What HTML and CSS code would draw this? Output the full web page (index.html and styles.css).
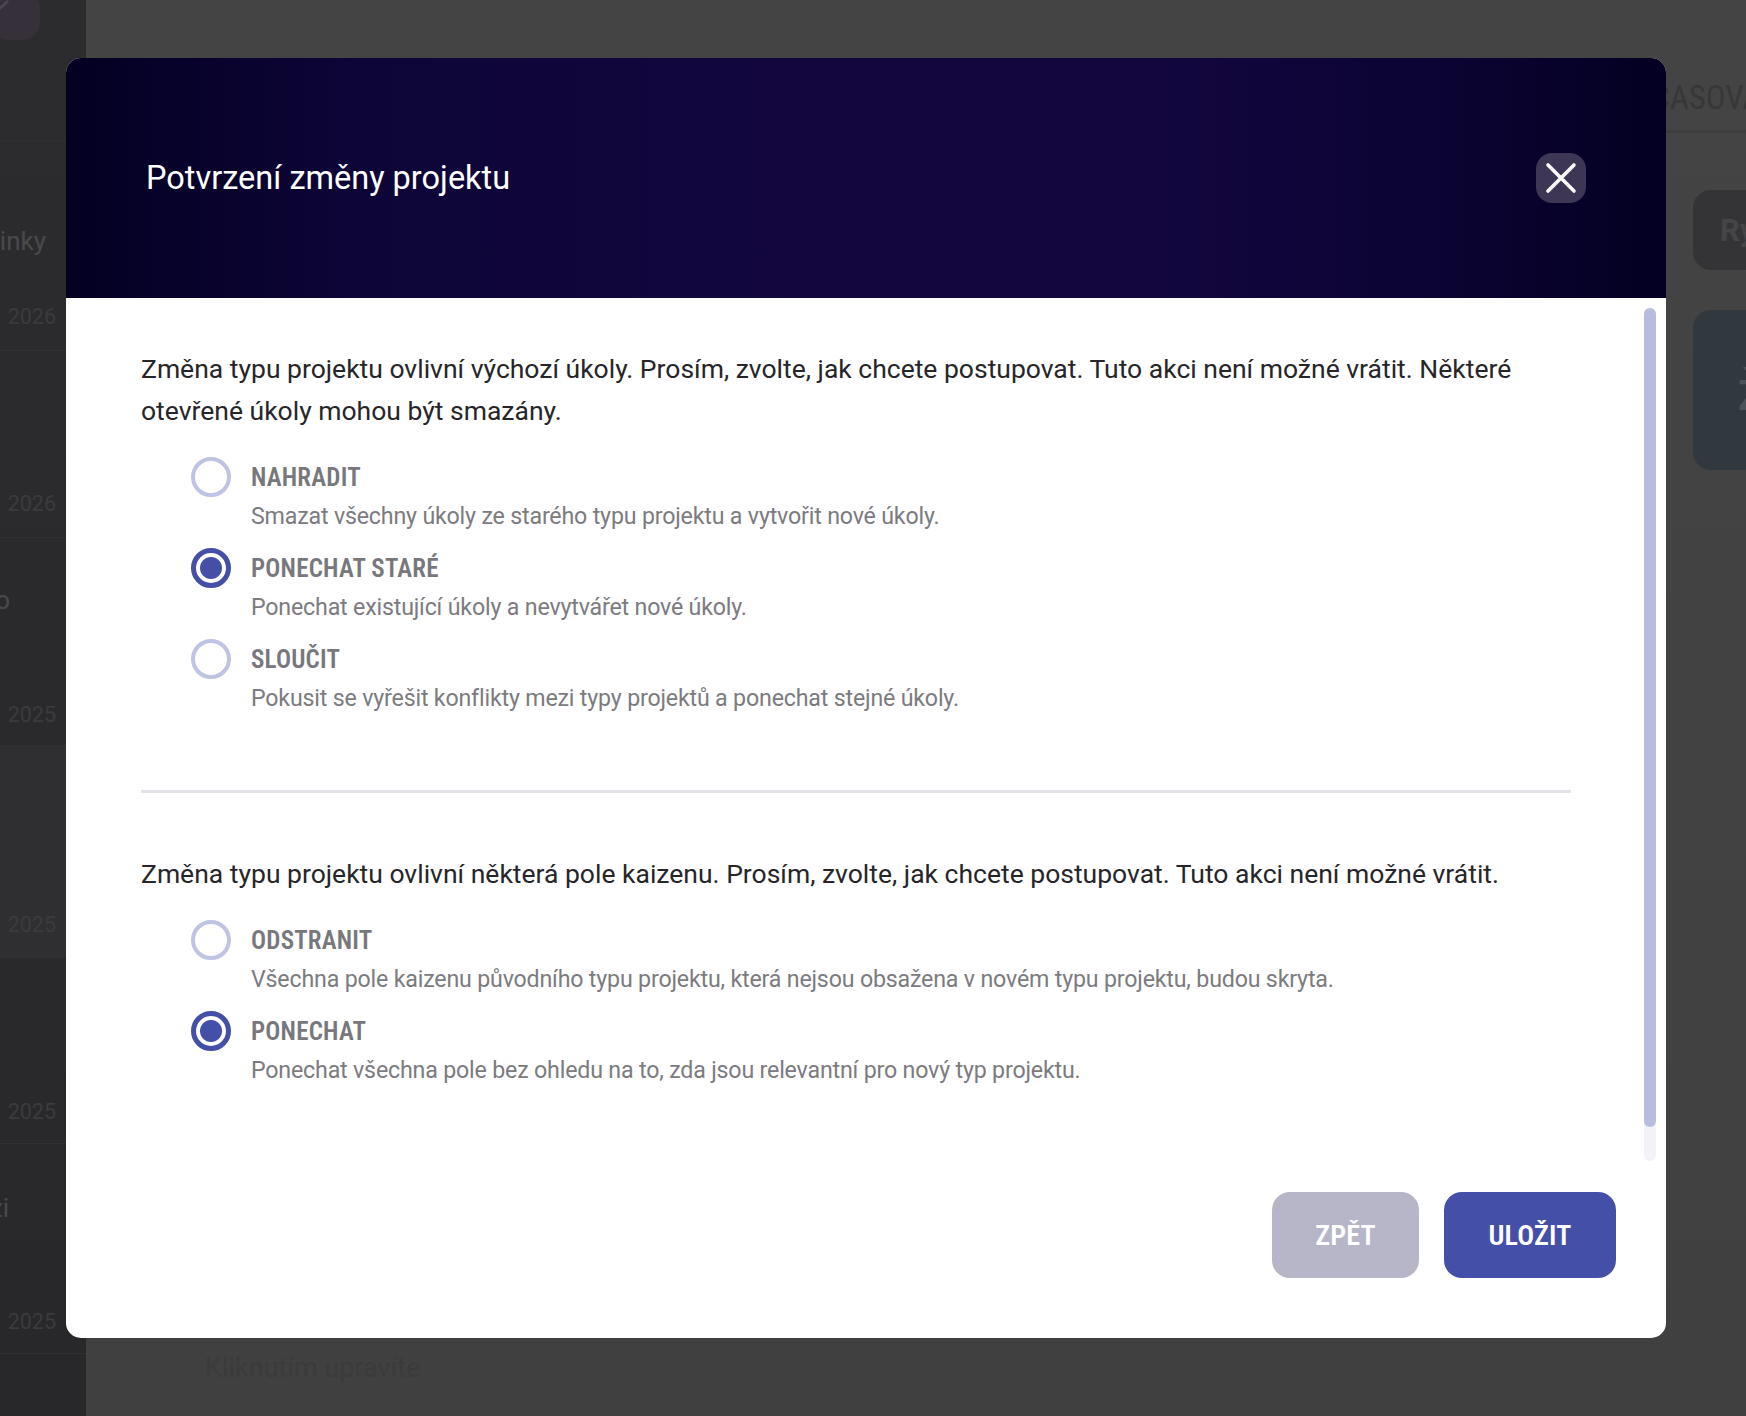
FILE: index.html
```html
<!doctype html>
<html lang="cs">
<head>
<meta charset="utf-8">
<title>Potvrzení změny projektu</title>
<link rel="stylesheet" href="styles.css">
</head>
<body>
<div class="page">
  <aside class="sidebar">
    <div class="side-head"><div class="side-logo"><svg class="side-chev" viewBox="0 0 10 18"><path d="M8 1 L-2 10"/></svg></div></div>
    <div class="side-row"><span class="side-label lab-inky">inky</span><span class="side-date">2026</span></div>
    <div class="side-row"><span class="side-date">2026</span></div>
    <div class="side-row"><span class="side-label lab-o">o</span><span class="side-date">2025</span></div>
    <div class="side-row side-row-light"><span class="side-date">2025</span></div>
    <div class="side-row side-row-short"><span class="side-date">2025</span></div>
    <div class="side-row side-row-last"><span class="side-label lab-zi">zi</span><span class="side-date">2025</span></div>
  </aside>
  <main class="main">
    <div class="tabs"><span class="tab">ČASOVÁ OSA</span></div>
    <div class="main-body">
      <div class="main-left"><span class="hint">Kliknutím upravíte</span></div>
      <div class="main-right">
        <div class="card card-dark"><span class="card-text">Ry</span></div>
        <div class="card card-blue"><span class="card-glyph">ž</span></div>
      </div>
    </div>
  </main>
</div>

<div class="overlay">
  <section class="modal">
    <header class="modal-head">
      <h1 class="modal-title">Potvrzení změny projektu</h1>
      <button class="close" aria-label="Zavřít">
        <svg viewBox="0 0 50 50" class="close-icon"><path d="M12 12 L38 38 M38 12 L12 38"/></svg>
      </button>
    </header>
    <div class="modal-body">
      <div class="modal-scroll">
        <p class="para">Změna typu projektu ovlivní výchozí úkoly. Prosím, zvolte, jak chcete postupovat. Tuto akci není možné vrátit. Některé otevřené úkoly mohou být smazány.</p>
        <div class="options">
          <div class="option">
            <span class="radio"></span>
            <div class="option-text"><div class="option-label">NAHRADIT</div><div class="option-desc">Smazat všechny úkoly ze starého typu projektu a vytvořit nové úkoly.</div></div>
          </div>
          <div class="option">
            <span class="radio radio-on"></span>
            <div class="option-text"><div class="option-label">PONECHAT STARÉ</div><div class="option-desc">Ponechat existující úkoly a nevytvářet nové úkoly.</div></div>
          </div>
          <div class="option">
            <span class="radio"></span>
            <div class="option-text"><div class="option-label">SLOUČIT</div><div class="option-desc">Pokusit se vyřešit konflikty mezi typy projektů a ponechat stejné úkoly.</div></div>
          </div>
        </div>
        <hr class="divider">
        <p class="para">Změna typu projektu ovlivní některá pole kaizenu. Prosím, zvolte, jak chcete postupovat. Tuto akci není možné vrátit.</p>
        <div class="options">
          <div class="option">
            <span class="radio"></span>
            <div class="option-text"><div class="option-label">ODSTRANIT</div><div class="option-desc">Všechna pole kaizenu původního typu projektu, která nejsou obsažena v novém typu projektu, budou skryta.</div></div>
          </div>
          <div class="option">
            <span class="radio radio-on"></span>
            <div class="option-text"><div class="option-label">PONECHAT</div><div class="option-desc">Ponechat všechna pole bez ohledu na to, zda jsou relevantní pro nový typ projektu.</div></div>
          </div>
        </div>
      </div>
      <div class="scrollbar"><div class="scroll-thumb"></div></div>
    </div>
    <footer class="modal-foot">
      <button class="btn btn-back">ZPĚT</button>
      <button class="btn btn-save">ULOŽIT</button>
    </footer>
  </section>
</div>
</body>
</html>
```
FILE: styles.css
```css
* { box-sizing: border-box; }
html, body { margin: 0; height: 100%; }
body { font-family: "Roboto", "Lato", sans-serif; overflow: hidden; background: #444; }

.page { display: flex; height: 100vh; overflow: hidden; }

.sidebar { width: 86px; flex: none; background: linear-gradient(#2c2c2e, #28282a); display: flex; flex-direction: column; overflow: hidden; }
.side-head { height: 141px; border-bottom: 1px solid #303033; flex: none; }
.side-logo { width: 50px; height: 50px; margin: -10px 0 0 -10px; background: #35303a; border-radius: 18px; position: relative; overflow: hidden; }
.side-chev { position: absolute; left: 10px; top: 10px; width: 10px; height: 18px; }
.side-chev path { stroke: #4a4650; stroke-width: 3; fill: none; }
.side-row { height: 210px; flex: none; border-bottom: 1px solid #303033; padding: 0 30px 19px 0; display: flex; flex-direction: column; align-items: flex-end; }
.side-row:nth-child(3) { height: 187px; }
.side-row:nth-child(4) { height: 208px; padding-bottom: 16px; }
.side-row-light { height: 212px; padding-bottom: 18px; background: #2f2f31; }
.side-row-short { height: 186px; padding-bottom: 17px; }
.side-row-last { padding-bottom: 17px; }
.side-date { margin-top: auto; font-size: 21.5px; line-height: 28px; color: #3b3b3d; }
.side-label { font-size: 26px; line-height: 32px; color: #4a4a4c; }
.lab-inky { margin-top: 84px; margin-right: 10px; }
.lab-o { margin-top: 46px; margin-right: 46px; }
.lab-zi { margin-top: 48px; margin-right: 47px; }

.main { flex: 1; min-width: 0; display: flex; flex-direction: column; background: linear-gradient(#444, #404040); }
.tabs { height: 133px; flex: none; border-bottom: 3px solid #3e3e3e; display: flex; align-items: flex-start; overflow: hidden; padding: 79px 0 0 1565px; }
.tab { flex: none; font-size: 33px; line-height: 38px; color: #373739; white-space: nowrap; font-stretch: condensed; }
.main-body { flex: 1; display: flex; min-height: 0; }
.main-left { flex: 1; display: flex; align-items: flex-end; padding: 0 0 32px 119px; }
.hint { font-size: 27px; line-height: 32px; color: #3b3b3b; white-space: nowrap; }
.main-right { width: 53px; flex: none; padding-top: 57px; display: flex; flex-direction: column; gap: 40px; overflow: hidden; }
.card { width: 200px; flex: none; border-radius: 18px; display: flex; white-space: nowrap; }
.card-dark { height: 80px; background: #343437; align-items: center; padding-left: 27px; }
.card-blue { height: 160px; background: #31393f; align-items: center; padding-left: 44px; }
.card-text { font-size: 31px; font-weight: 700; color: #454548; }
.card-glyph { font-size: 58px; color: #4a5257; }

.overlay { position: fixed; inset: 0; padding: 58px 80px 78px 66px; display: flex; }
.modal { flex: 1; min-width: 0; background: #fff; border-radius: 15px; overflow: hidden; display: flex; flex-direction: column; }
.modal-head { height: 240px; flex: none; display: flex; align-items: center; justify-content: space-between; padding: 0 80px; background: linear-gradient(90deg, #030022 0%, #0d0537 18%, #13063f 45%, #13063f 68%, #0c0434 85%, #030022 100%); }
.modal-title { margin: 0; font-size: 32.5px; font-weight: 400; color: #fff; }
.close { width: 50px; height: 50px; padding: 0; border: 0; border-radius: 16px; background: #3d3654; display: block; }
.close-icon { display: block; width: 50px; height: 50px; }
.close-icon path { stroke: #fff; stroke-width: 3.6; stroke-linecap: round; fill: none; }

.modal-body { position: relative; height: 863px; flex: none; }
.modal-scroll { height: 100%; overflow: hidden; padding: 50px 95px 0 75px; }
.scrollbar { position: absolute; top: 10px; right: 10px; bottom: 0; width: 12px; border-radius: 6px; background: #f2f2f8; }
.scroll-thumb { height: 819px; border-radius: 6px; background: #b8bcde; }

.para { margin: 0; font-size: 26.5px; line-height: 42px; color: #26262a; }
.options { margin: 25px 0 0 50px; display: flex; flex-direction: column; gap: 14px; }
.option { display: flex; gap: 20px; align-items: flex-start; }
.radio { width: 40px; height: 40px; flex: none; border-radius: 50%; border: 4px solid #bfc3e4; background: #fff; }
.radio-on { border: 5px solid #4450a8; background: radial-gradient(circle, #4450a8 0 10.5px, #fff 11.5px); }
.option-label { font-size: 25px; line-height: 41px; font-weight: 600; color: #77777c; font-stretch: condensed; letter-spacing: .2px; }
.option-desc { font-size: 23.2px; line-height: 36px; color: #7b7b80; letter-spacing: -.18px; }
.divider { margin: 74px 0 60px; height: 3px; border: 0; background: #e3e3e9; }

.modal-foot { flex: 1; display: flex; justify-content: flex-end; align-items: flex-start; gap: 25px; padding: 31px 50px 0 0; }
.btn { height: 86px; border: 0; border-radius: 18px; color: #fff; font-family: inherit; font-size: 28px; font-weight: 600; font-stretch: condensed; letter-spacing: .2px; padding: 0; }
.btn-back { width: 147px; background: #b7b6c8; }
.btn-save { width: 172px; background: #4450a8; }
```
